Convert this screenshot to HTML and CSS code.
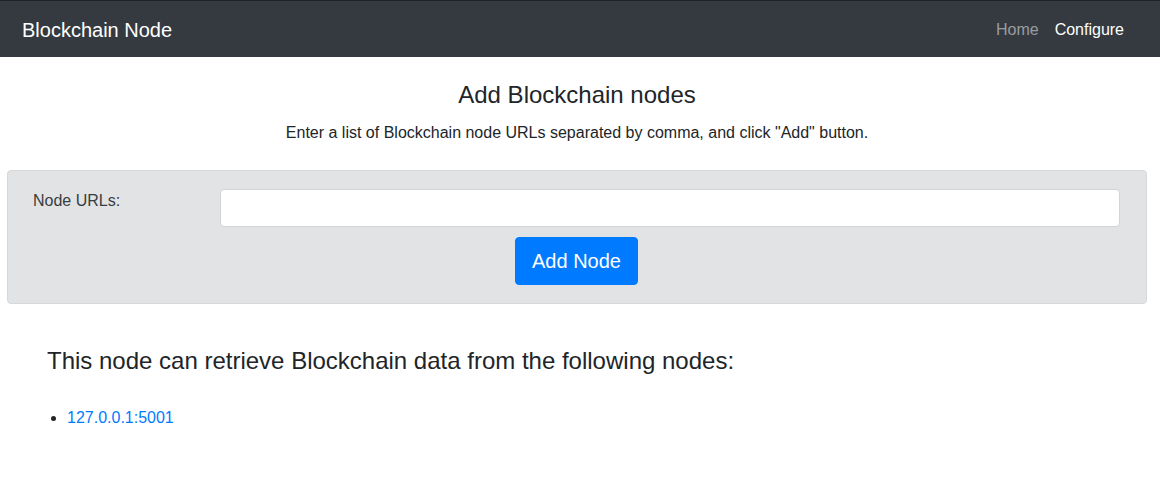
FILE: index.html
```html
<!DOCTYPE html>
<html lang="en">
<head>
<meta charset="utf-8">
<title>Blockchain Node</title>
<link rel="stylesheet" href="styles.css">
</head>
<body>
<nav class="navbar">
  <a class="brand" href="#">Blockchain Node</a>
  <ul class="nav">
    <li><a class="nav-link" href="#">Home</a></li>
    <li><a class="nav-link active" href="#">Configure</a></li>
  </ul>
</nav>
<main class="content">
  <header class="intro">
    <h3 class="title">Add Blockchain nodes</h3>
    <p class="lead">Enter a list of Blockchain node URLs separated by comma, and click "Add" button.</p>
  </header>
  <form class="panel">
    <label class="label" for="nodes">Node URLs:</label>
    <input class="input" id="nodes" type="text">
    <button class="btn" type="button">Add Node</button>
  </form>
</main>
<section class="nodes">
  <h4 class="nodes-title">This node can retrieve Blockchain data from the following nodes:</h4>
  <ul class="node-list">
    <li><a class="node-link" href="#">127.0.0.1:5001</a></li>
  </ul>
</section>
</body>
</html>
```
FILE: styles.css
```css
* { box-sizing: border-box; }
html, body { margin: 0; padding: 0; }
body {
  font-family: "Liberation Sans", Arial, sans-serif;
  font-size: 16px;
  line-height: 1.5;
  color: #212529;
  background: #fff;
}
.navbar {
  height: 57px;
  background: #343a40;
  border-top: 1px solid #1f2326;
  display: flex;
  align-items: center;
  justify-content: space-between;
  padding: 1px 28px 0 22px;
}
.brand {
  color: #fff;
  font-size: 20px;
  line-height: 30px;
  text-decoration: none;
}
.nav {
  display: flex;
  list-style: none;
  margin: 0;
  padding: 0;
}
.nav-link {
  display: block;
  padding: 8px;
  color: rgba(255,255,255,.5);
  text-decoration: none;
}
.nav-link.active { color: #fff; }
.content { margin: 0 13px 0 7px; }
.intro { text-align: center; }
.title {
  font-size: 24px;
  font-weight: 400;
  line-height: 29px;
  margin: 23px 0 12px;
}
.lead {
  margin: 0 0 25px;
  font-size: 16px;
  line-height: 24px;
}
.panel {
  background: #e2e3e5;
  border: 1px solid #d6d8db;
  border-radius: 4px;
  padding: 18px 26px 18px 25px;
  display: grid;
  grid-template-columns: 187px 1fr;
  row-gap: 10px;
  color: #383d41;
}
.label {
  line-height: 24px;
}
.input {
  height: 38px;
  border: 1px solid #ced4da;
  border-radius: 4px;
  background: #fff;
  font: inherit;
  padding: 6px 12px;
}
.btn {
  grid-column: 1 / 3;
  justify-self: center;
  background: #007bff;
  border: 1px solid #007bff;
  color: #fff;
  font-family: inherit;
  font-size: 20px;
  line-height: 30px;
  padding: 8px 16px;
  border-radius: 4px;
}
.nodes { padding: 0 47px; }
.nodes-title {
  font-size: 24px;
  font-weight: 400;
  line-height: 29px;
  margin: 42px 0 31px;
}
.node-list {
  margin: 0;
  padding-left: 20px;
}
.node-link {
  color: #007bff;
  text-decoration: none;
}
```
